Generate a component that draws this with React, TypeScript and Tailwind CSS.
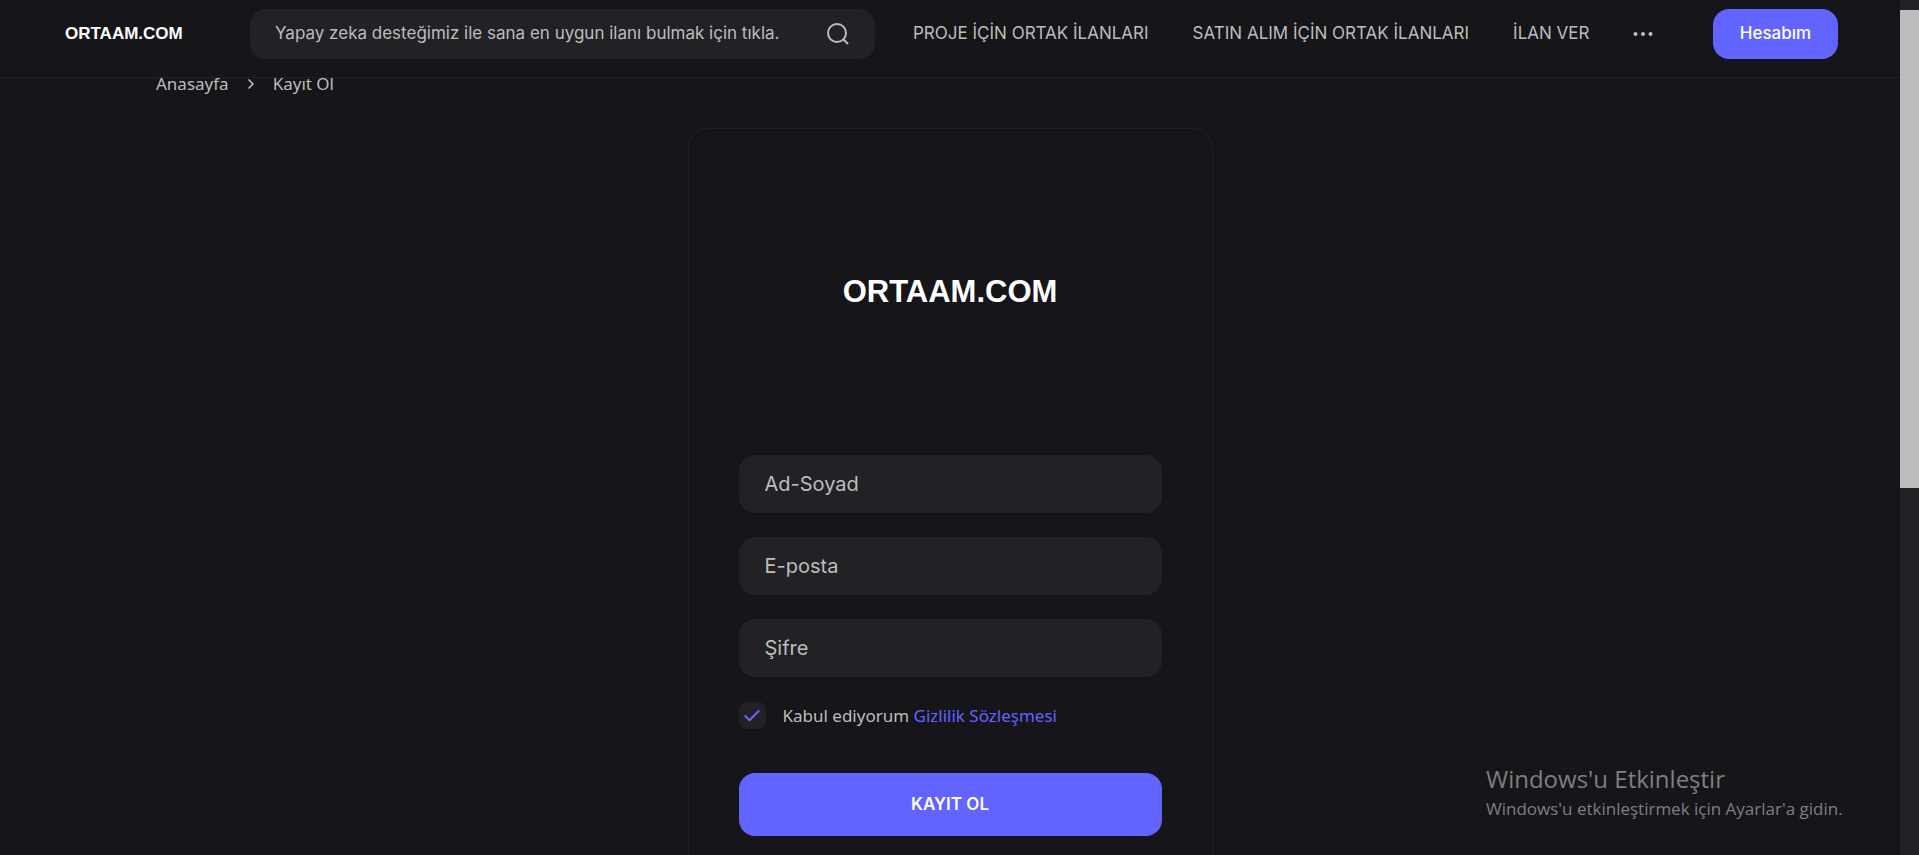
import { Check, ChevronRight } from "lucide-react";

const navLinks = ["PROJE İÇİN ORTAK İLANLARI", "SATIN ALIM İÇİN ORTAK İLANLARI", "İLAN VER"];

const fields = [
  { id: "name", label: "Ad-Soyad", type: "text" },
  { id: "email", label: "E-posta", type: "email" },
  { id: "password", label: "Şifre", type: "password" },
];

function Header() {
  return (
    <header className="flex h-[78px] shrink-0 items-start border-b border-[#222126] bg-[#16151a] pt-[9px] pr-[62px] pl-[65px] font-['Inter',sans-serif] text-[17px] text-[#bdbdbd]">
      <a
        href="#"
        className="flex h-[50px] w-[185px] shrink-0 items-center font-['Liberation_Sans',sans-serif] font-bold text-white"
      >
        ORTAAM.COM
      </a>
      <button
        type="button"
        className="flex h-[50px] w-[625px] items-center justify-between rounded-2xl bg-[#222126] pr-[25px] pl-[25px] whitespace-nowrap"
      >
        <span>Yapay zeka desteğimiz ile sana en uygun ilanı bulmak için tıkla.</span>
        <svg viewBox="0 0 24 24" className="size-6" fill="none" stroke="currentColor" strokeWidth="2" aria-hidden="true">
          <circle cx="11" cy="11" r="9" />
          <path d="M17.5 17.5l4.5 4.5" />
        </svg>
      </button>
      <nav className="flex h-[50px] items-center gap-11 pl-[38px] whitespace-nowrap">
        {navLinks.map((label) => (
          <a key={label} href="#">
            {label}
          </a>
        ))}
        <button type="button" aria-label="Menü" className="flex size-5 items-center justify-center">
          <svg viewBox="0 0 20 4" className="h-1 w-5" fill="currentColor" aria-hidden="true">
            <circle cx="2.5" cy="2" r="2" />
            <circle cx="10" cy="2" r="2" />
            <circle cx="17.5" cy="2" r="2" />
          </svg>
        </button>
      </nav>
      <button type="button" className="ml-auto h-[50px] w-[125px] shrink-0 rounded-2xl bg-[#6164ff] font-medium text-white">
        Hesabım
      </button>
    </header>
  );
}

function SignUpCard() {
  return (
    <form className="mx-auto mt-[33px] w-[525px] rounded-[20px] border border-[#222126] px-[50px] pb-[50px]">
      <div className="flex h-[326px] items-center justify-center font-['Liberation_Sans',sans-serif] text-[31px] font-bold text-white">
        ORTAAM.COM
      </div>
      <div className="flex flex-col gap-6">
        {fields.map((f) => (
          <input
            key={f.id}
            id={f.id}
            type={f.type}
            placeholder={f.label}
            aria-label={f.label}
            className="h-[58px] w-full rounded-2xl bg-[#222126] px-[26px] font-['Inter',sans-serif] text-xl text-[#bdbdbd] outline-none placeholder:text-[#bdbdbd]"
          />
        ))}
      </div>
      <div className="mt-[25px] flex h-[27px] items-center gap-[17px] text-[17px] leading-6 text-[#bdbdbd]">
        <span className="relative size-[27px]">
          <input id="terms" type="checkbox" defaultChecked className="peer block size-full appearance-none rounded-lg bg-[#222126]" />
          <Check className="pointer-events-none absolute inset-0 m-auto hidden size-5 text-[#6164ff] peer-checked:block" strokeWidth={2.5} />
        </span>
        <label htmlFor="terms">
          Kabul ediyorum{" "}
          <a href="#" className="text-[#6164ff]">
            Gizlilik Sözleşmesi
          </a>
        </label>
      </div>
      <button type="submit" className="mt-11 h-[63px] w-full rounded-2xl bg-[#6164ff] font-['Inter',sans-serif] text-[17px] font-semibold text-white">
        KAYIT OL
      </button>
    </form>
  );
}

export default function App() {
  return (
    <div className="relative flex h-screen overflow-hidden bg-[#16151a] font-['Noto_Sans',sans-serif]">
      <div className="flex min-w-0 flex-1 flex-col">
        <Header />
        <main className="min-h-0 flex-1">
          <nav aria-label="Sayfa yolu" className="-mt-1.5 flex h-[23px] items-center pl-[156px] text-[17px] leading-6 text-[#bdbdbd]">
            <a href="#">Anasayfa</a>
            <ChevronRight className="mx-3.5 size-4" strokeWidth={2.5} />
            <span>Kayıt Ol</span>
          </nav>
          <SignUpCard />
        </main>
      </div>
      <div className="w-[19px] shrink-0 bg-[#222126] pt-[10px]" aria-hidden="true">
        <div className="h-[478px] bg-[#bdbdbd]" />
      </div>
      <aside className="pointer-events-none absolute right-[78px] bottom-8 w-[355px] font-['Open_Sans',sans-serif] whitespace-nowrap text-[#7f7f80]">
        <p className="text-2xl leading-8">Windows'u Etkinleştir</p>
        <p className="text-[17px] leading-7">Windows'u etkinleştirmek için Ayarlar'a gidin.</p>
      </aside>
    </div>
  );
}
